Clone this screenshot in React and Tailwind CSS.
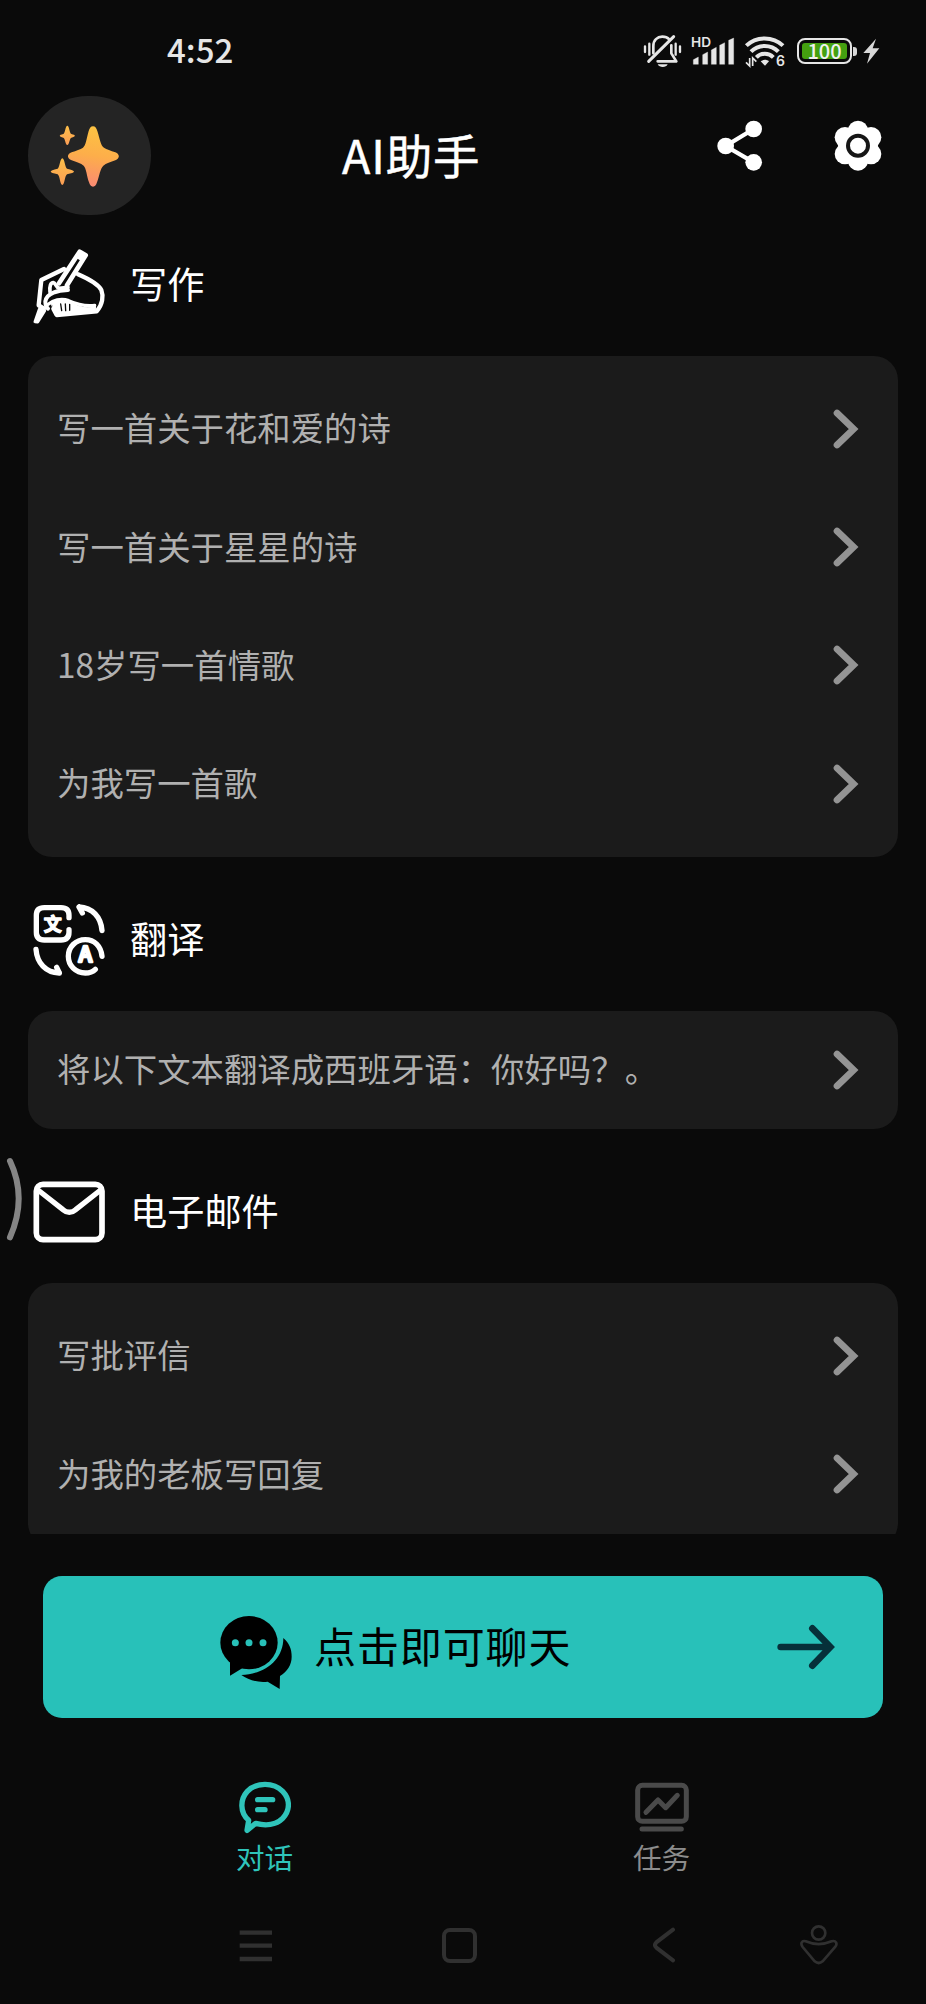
import clsx from 'clsx'

/* ---------- status bar ---------- */

function MuteIcon() {
  return (
    <svg className="w-[39px] h-[34px]" viewBox="538 102 117 102" fill="none" stroke="#e6e6e6" strokeWidth="8" strokeLinecap="round" strokeLinejoin="round">
      <path d="M544 139v17M557 131v33M636 131v33M649 139v17" strokeWidth="7" />
      <path d="M569 160V138c0-18 12-28 27-28 9 0 16 3 21 8" />
      <path d="M623 136v24l15 24h-56" />
      <path d="M555 184L630 110" strokeWidth="9" />
      <path d="M582 193h30c-4 11-25 11-30 0z" fill="#e6e6e6" stroke="none" />
    </svg>
  )
}

function SignalIcon() {
  return (
    <svg className="w-[46px] h-[38px]" viewBox="681 95 138 114" fill="#e6e6e6">
      <text x="684" y="141" fontSize="40" fontWeight="600" fontFamily="Inter, sans-serif" textLength="60" lengthAdjust="spacingAndGlyphs">HD</text>
      <path d="M691 178l15-8v22h-15zM719 163l15-8v37h-15zM745 149l15-8v51h-15zM770 135l15-8v65h-15zM797 120l15-7v79h-15z" stroke="#e6e6e6" strokeWidth="1" strokeLinejoin="round" />
    </svg>
  )
}

function WifiIcon() {
  return (
    <svg className="w-[44px] h-[42px]" viewBox="840 90 132 126" fill="none" stroke="#e6e6e6" strokeWidth="12">
      <path d="M850 137c30-29 80-29 110 0" />
      <path d="M864 155c22-23 60-23 82 0" />
      <path d="M880 172c14-14 37-14 51 0" />
      <path d="M893 184c7-6 18-6 25 0l-12 13z" fill="#e6e6e6" stroke="none" />
      <path d="M860 174v24l-11-11M869 198v-24l11 11" strokeWidth="5" />
      <text x="939" y="199" fill="#e6e6e6" stroke="none" fontSize="42" fontWeight="600" fontFamily="Inter, sans-serif">6</text>
    </svg>
  )
}

function Battery() {
  return (
    <div className="flex items-center">
      <div className="w-[55px] h-[26px] rounded-[8px] border-2 border-[#e6e6e6] p-[3px]">
        <div className="flex h-full items-center justify-center rounded-[3px] bg-[#44a010] text-[20px] leading-none font-medium text-[#f0f0f0]">100</div>
      </div>
      <div className="w-[4px] h-[9px] ml-px rounded-r-[3px] bg-[#d8d8d8]" />
      <svg className="w-[17px] h-[26px] ml-[6px]" viewBox="1198 112 51 78" fill="#d8d8d8">
        <path d="M1237 114l-38 43h20l-9 32 37-46h-20z" />
      </svg>
    </div>
  )
}

function StatusBar() {
  return (
    <div className="flex h-[96px] items-start pl-[167px] pr-[46px] pt-[34px]">
      <div className="-mt-[2px] h-[34px] text-[33px] leading-[34px] font-medium text-[#e6e6e6]">4:52</div>
      <div className="ml-auto flex h-[34px] items-center">
        <MuteIcon />
        <div className="ml-[8px]"><SignalIcon /></div>
        <div className="ml-[7px]"><WifiIcon /></div>
        <div className="ml-[10px]"><Battery /></div>
      </div>
    </div>
  )
}

/* ---------- header ---------- */

function Sparkles() {
  return (
    <svg className="mr-[11px] w-[69px] h-[62px]" viewBox="149 372 207 186">
      <defs>
        <linearGradient id="spark" gradientUnits="userSpaceOnUse" x1="300" y1="375" x2="270" y2="555">
          <stop offset="0" stopColor="#fcc442" />
          <stop offset="0.5" stopColor="#fdae4a" />
          <stop offset="1" stopColor="#fa8a72" />
        </linearGradient>
        <linearGradient id="spark-sm" x1="0" y1="0" x2="0" y2="1">
          <stop offset="0" stopColor="#fcbf48" />
          <stop offset="1" stopColor="#fb9d55" />
        </linearGradient>
      </defs>
      <path fill="url(#spark)" d="M278 376c7 0 10 5 13 14 8 26 10 44 20 50 8 6 20 8 34 14 14 6 14 18 0 24-14 6-28 8-36 16-9 8-12 30-19 50-3 9-6 13-12 13s-9-4-12-13c-7-20-8-42-16-50-8-8-22-10-36-16-15-6-15-18 0-24 14-6 26-8 34-14 9-7 10-26 17-50 3-9 6-14 13-14z" />
      <path fill="url(#spark-sm)" d="M201 374c6 0 6 22 12 25 14 3 14 7 0 11-6 3-6 22-12 22s-6-19-12-22c-14-4-14-8 0-11 6-3 6-25 12-25z" />
      <path fill="url(#spark-sm)" d="M186 472c7 0 7 26 14 31 28 6 28 11 0 17-7 5-7 32-14 32s-7-27-14-32c-28-6-28-11 0-17 7-5 7-31 14-31z" />
    </svg>
  )
}

function ShareIcon() {
  return (
    <svg className="w-[46px] h-[51px]" viewBox="760 360 138 153" fill="#fff">
      <path d="M870 387L786 438L870 487" fill="none" stroke="#fff" strokeWidth="13" />
      <circle cx="870" cy="387" r="25" />
      <circle cx="786" cy="438" r="25" />
      <circle cx="870" cy="487" r="25" />
    </svg>
  )
}

function GearIcon() {
  return (
    <svg className="w-[48px] h-[51px]" viewBox="1111 360 144 153" fill="#fff">
      <circle cx="1183" cy="437" r="60" />
      <circle cx="1183" cy="392" r="30" />
      <circle cx="1183" cy="482" r="30" />
      <circle cx="1222" cy="412" r="31" />
      <circle cx="1222" cy="462" r="31" />
      <circle cx="1144" cy="412" r="31" />
      <circle cx="1144" cy="462" r="31" />
      <circle cx="1183" cy="437" r="30" fill="none" stroke="#161616" strokeWidth="12" />
    </svg>
  )
}

function Header() {
  return (
    <header className="flex h-[120px] items-start pl-[28px] pr-[44px]">
      <div className="flex w-[123px] h-[119px] items-center justify-center rounded-full bg-[#242424]">
        <Sparkles />
      </div>
      <h1 className="ml-[191px] h-[119px] text-[46.5px] leading-[115px] tracking-[0.9px] text-white whitespace-nowrap [-webkit-text-stroke:0.5px_white]">AI助手</h1>
      <div className="ml-auto mt-[24px] flex items-center gap-[71px]">
        <ShareIcon />
        <GearIcon />
      </div>
    </header>
  )
}

/* ---------- sections ---------- */

function WriteIcon() {
  return (
    <svg className="w-[73px] h-[77px]" viewBox="25 22 219 231" fill="none" stroke="#fff" strokeWidth="13" strokeLinejoin="round" strokeLinecap="round">
      {/* back of the hand */}
      <path d="M118 85L50 118L42 194L58 204" />
      <path d="M160 101C190 114 220 130 230 148C237 166 234 192 216 212L96 223L86 204" />
      {/* pen */}
      <path d="M103 128L165 33L183 44L127 134" strokeWidth="14" />
      <path d="M165 33L183 44L172 60L156 50z" fill="#fff" strokeWidth="4" />
      {/* thumb and knuckle */}
      <path d="M76 154C74 136 78 126 86 126C94 127 92 140 104 143L130 140" strokeWidth="11" />
      <path d="M130 148C100 148 66 158 62 182C62 192 62 198 70 204" strokeWidth="12" />
      {/* curled fingers */}
      <path d="M66 194C84 178 110 172 132 180C154 190 176 198 210 194" strokeWidth="10" />
      <path d="M80 188C104 174 130 176 150 190C172 202 190 202 212 196L214 214L96 226z" fill="#fff" strokeWidth="3" />
      <path d="M108 190l3 20M122 190l1 20M135 191v18" stroke="#0a0a0a" strokeWidth="4" />
      {/* nib */}
      <path d="M44 206L31 243L39 244L60 210z" fill="#fff" strokeWidth="9" />
    </svg>
  )
}

function TranslateIcon() {
  return (
    <svg className="w-[73px] h-[73px]" viewBox="100 45 219 219" fill="none" stroke="#fff" strokeWidth="16" strokeLinejoin="round" strokeLinecap="round">
      <path d="M208 86V79C208 63 200 56 184 56H134C118 56 110 63 110 79V130C110 146 118 153 134 153H184C200 153 208 146 208 130V122" />
      <path d="M238 54C278 56 304 84 307 125M238 54L248 72" />
      <path d="M109 181C112 222 138 250 179 252M179 252L171 235" />
      <path d="M307 202C304 171 284 152 257 152C228 152 206 174 206 202C206 230 228 252 257 252C270 252 280 248 287 241" />
      <text x="159" y="126" fill="#fff" strokeWidth="4" textAnchor="middle" fontSize="54" fontWeight="700" fontFamily="'Noto Sans CJK SC', sans-serif">文</text>
      <text x="257" y="220" fill="#fff" strokeWidth="8" textAnchor="middle" fontSize="64" fontWeight="500" fontFamily="'Noto Sans CJK SC', sans-serif">A</text>
    </svg>
  )
}

function MailIcon() {
  return (
    <svg className="w-[73px] h-[63px]" viewBox="100 153 219 189" fill="none" stroke="#fff" strokeWidth="17" strokeLinejoin="round">
      <rect x="110" y="163" width="197" height="166" rx="20" />
      <path d="M115 180L190 239Q209 255 228 239L303 180" strokeWidth="16" />
    </svg>
  )
}

function ChevronRight() {
  return (
    <svg className="w-[26px] h-[40px]" viewBox="158 205 78 120" fill="none" stroke="#949494" strokeWidth="20" strokeLinecap="round">
      <path d="M170 217L220 265L170 313" strokeLinejoin="miter" />
    </svg>
  )
}

function Section({ icon, title, items }) {
  const single = items.length === 1
  return (
    <section>
      <div className="flex h-[140px] items-center gap-[24px] pl-[33px]">
        {icon}
        <h2 className="pb-[5px] text-[37.2px] leading-none text-white">{title}</h2>
      </div>
      <ul className={clsx('mx-[28px] rounded-[24px] bg-[#1b1b1b]', !single && 'py-[14px]')}>
        {items.map((item) => (
          <li key={item} className="flex h-[118.2px] items-center justify-between pl-[29px] pr-[39px]">
            <span className="pb-[4px] text-[33.4px] leading-none text-[#b0b0b0]">{item}</span>
            <ChevronRight />
          </li>
        ))}
      </ul>
    </section>
  )
}

/* ---------- bottom ---------- */

function ChatButton() {
  return (
    <button className="mx-[43px] mt-[42px] flex h-[142px] items-center rounded-[19px] bg-[#28c1b9] pl-[177px] pr-[48px] text-black">
      <svg className="mt-[10px] w-[72px] h-[75px]" viewBox="660 523 216 225">
        <ellipse cx="747" cy="606" rx="86" ry="80" />
        <path d="M690 655V705L728 682z" />
        <path d="M850 592C868 608 875 625 875 648C875 672 862 692 840 706L839 745L803 723C772 727 744 717 724 703C795 700 850 658 850 592z" />
        <g fill="#28c1b9">
          <circle cx="706" cy="606" r="10.5" />
          <circle cx="747" cy="606" r="10.5" />
          <circle cx="789" cy="606" r="10.5" />
        </g>
      </svg>
      <span className="ml-[22px] pb-[4px] text-[42px] leading-none tracking-[0.9px]">点击即可聊天</span>
      <svg className="ml-auto w-[58px] h-[46px]" viewBox="940 554 174 138" fill="none" stroke="#06303a" strokeWidth="20" strokeLinecap="round">
        <path d="M951 623H1095M1046 567L1100 623L1046 679" />
      </svg>
    </button>
  )
}

function Tabs() {
  return (
    <nav className="mt-[63px] grid h-[94px] grid-cols-2 px-[66px] text-[28.6px] leading-none">
      <div className="flex flex-col items-center text-[#2fc4ba]">
        <svg className="w-[52px] h-[53px]" viewBox="174 95 156 159" fill="none" stroke="currentColor" strokeWidth="16" strokeLinecap="round" strokeLinejoin="round">
          <path d="M198 243L203 213C176 189 177 150 199 126C226 98 278 98 305 126C328 150 328 183 305 207C285 227 253 230 224 222z" />
          <path d="M230 151H275M230 181H252" />
        </svg>
        <span className="mt-[9px]">对话</span>
      </div>
      <div className="flex flex-col items-center text-[#8c8c8c]">
        <svg className="w-[54px] h-[53px]" viewBox="221 95 162 159" fill="none" stroke="#4a4a4a" strokeWidth="15" strokeLinecap="round" strokeLinejoin="round">
          <rect x="229" y="108" width="146" height="108" rx="14" />
          <path d="M254 189L290 152L313 175L348 138" />
          <path d="M242 239H360" />
        </svg>
        <span className="mt-[9px]">任务</span>
      </div>
    </nav>
  )
}

function SystemNav() {
  return (
    <div className="mt-[49px] flex h-[42px] items-center pl-[239px] text-[#303030]">
      <svg className="w-[34px] h-[33px]" viewBox="177 537 102 99" stroke="currentColor" strokeWidth="13">
        <path d="M179 548H276M179 587H276M179 627H276" />
      </svg>
      <div className="ml-[169px] w-[35px] h-[35px] rounded-[8px] border-4 border-current" />
      <svg className="ml-[175px] w-[24px] h-[36px]" viewBox="275 533 72 108" fill="none" stroke="currentColor" strokeWidth="12" strokeLinecap="round">
        <path d="M338 541L288 579Q280 587 288 595L338 633" />
      </svg>
      <svg className="ml-[124px] w-[38px] h-[40px]" viewBox="721 524 114 120" fill="none" stroke="currentColor" strokeWidth="8">
        <circle cx="777" cy="548" r="20" />
        <path d="M738 573C766 585 790 584 816 573C829 569 834 580 827 589L789 633Q777 643 765 633L729 590C721 579 727 569 738 573z" />
      </svg>
    </div>
  )
}

const SECTIONS = [
  {
    title: '写作',
    icon: <WriteIcon />,
    items: ['写一首关于花和爱的诗', '写一首关于星星的诗', '18岁写一首情歌', '为我写一首歌'],
  },
  { title: '翻译', icon: <TranslateIcon />, items: ['将以下文本翻译成西班牙语：你好吗？。'] },
  { title: '电子邮件', icon: <MailIcon />, items: ['写批评信', '为我的老板写回复'] },
]

export default function App() {
  return (
    <div lang="zh-CN" className="relative flex h-[2004px] w-[926px] flex-col overflow-hidden bg-[#0a0a0a] font-['Noto_Sans_CJK_SC',sans-serif]">
      <StatusBar />
      <Header />

      <main className="flex h-[1318px] shrink-0 flex-col gap-[14px] overflow-hidden">
        {SECTIONS.map((s) => (
          <Section key={s.title} {...s} />
        ))}
      </main>

      <ChatButton />
      <Tabs />
      <SystemNav />

      {/* edge gesture handle */}
      <svg className="absolute left-[5px] top-[1156px] w-[19px] h-[86px]" viewBox="15 78 57 258" fill="none" stroke="#858585" strokeWidth="18" strokeLinecap="round">
        <path d="M30 93C64 165 64 245 30 322" />
      </svg>
    </div>
  )
}
